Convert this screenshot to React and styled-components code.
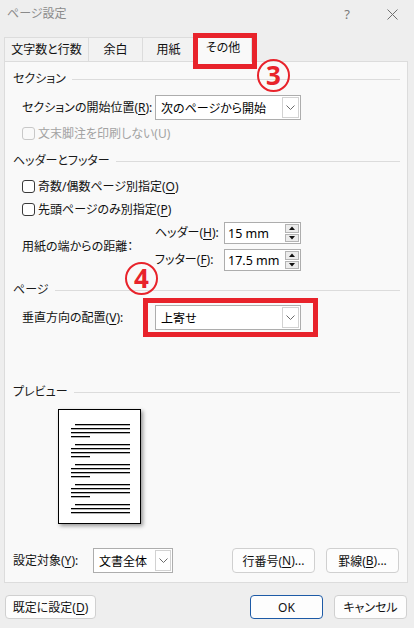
import React from "react";
import styled, { createGlobalStyle } from "styled-components";

const FONT = `"Noto Sans", "Noto Sans CJK JP", sans-serif`;
const RED = "#e8232b";

const Global = createGlobalStyle`
  html, body { margin: 0; padding: 0; background: #eeeeee; }
  body {
    font-family: ${FONT};
    font-size: 12px;
    color: #111;
    font-feature-settings: "palt" 1;
  }
  * { box-sizing: border-box; }
`;

const Window = styled.div`
  position: relative;
  width: 414px;
  height: 628px;
  overflow: hidden;
  background: #eeeeee;
  display: flex;
  flex-direction: column;
`;

const TitleBar = styled.div`
  height: 37px;
  display: flex;
  align-items: flex-start;
  padding: 6px 16px 0 7px;
  color: #8a8a8a;
  line-height: 16px;
`;

const TitleText = styled.span`
  font-size: 12px;
`;

const TitleControls = styled.div`
  margin-left: auto;
  display: flex;
  align-items: center;
  gap: 37px;
  height: 16px;
`;

const Help = styled.span`
  font-size: 13px;
  color: #7a7a7a;
`;

const TabRow = styled.div`
  height: 24px;
  display: flex;
  align-items: flex-end;
  padding-left: 4px;
`;

const Tab = styled.div`
  position: relative;
  width: ${(p) => p.$w}px;
  height: ${(p) => (p.$active ? 28 : 24)}px;
  margin-bottom: ${(p) => (p.$active ? -1 : 0)}px;
  z-index: ${(p) => (p.$active ? 1 : 0)};
  background: ${(p) => (p.$active ? "#f9f9f9" : "#f2f2f2")};
  border: 1px solid #dcdcdc;
  border-bottom: none;
  border-left: ${(p) => (p.$first ? "1px solid #dcdcdc" : "none")};
  display: flex;
  justify-content: center;
  padding-top: ${(p) => (p.$active ? 5 : 4)}px;
  font-size: 12px;
  line-height: 16px;
  color: #111;
`;

const Panel = styled.div`
  margin: 0 6px 0 4px;
  height: 522px;
  background: #f9f9f9;
  border: 1px solid #dcdcdc;
  padding: 0 7px 9px 8px;
  display: flex;
  flex-direction: column;
`;

const GroupHeader = styled.div`
  display: flex;
  align-items: center;
  gap: 6px;
  height: 16px;
  line-height: 16px;
  margin-top: ${(p) => p.$mt}px;
  color: #1a1a1a;
  &::after {
    content: "";
    flex: 1;
    height: 1px;
    background: #dcdcdc;
  }
`;

const Row = styled.div`
  display: flex;
  align-items: center;
  margin-left: 9px;
  margin-top: ${(p) => p.$mt}px;
`;

const Label = styled.span`
  width: ${(p) => p.$w}px;
  flex: none;
  line-height: 16px;
  color: ${(p) => (p.$disabled ? "#a3a3a3" : "#111")};
`;

const Key = styled.span`
  text-decoration: underline;
  text-underline-offset: 2px;
`;

const Select = styled.div`
  width: ${(p) => p.$w}px;
  height: 25px;
  flex: none;
  border: 1px solid #adadad;
  background: #fff;
  display: flex;
`;

const SelectText = styled.span`
  flex: 1;
  display: flex;
  align-items: center;
  padding-left: 5px;
  color: #000;
`;

const DropBtn = styled.span`
  width: ${(p) => p.$w || 17}px;
  margin: 1px;
  border: 1px solid #d2d2d2;
  background: #fff;
  display: flex;
  align-items: center;
  justify-content: center;
`;

const CheckRow = styled.label`
  display: flex;
  align-items: center;
  gap: 3px;
  height: 16px;
  margin-left: 9px;
  margin-top: ${(p) => p.$mt}px;
  color: ${(p) => (p.$disabled ? "#a3a3a3" : "#111")};
`;

const Box = styled.span`
  width: 13px;
  height: 13px;
  border: 1px solid ${(p) => (p.$disabled ? "#c8c8c8" : "#3a3a3a")};
  border-radius: 3px;
  background: ${(p) => (p.$disabled ? "#f9f9f9" : "#fff")};
  flex: none;
`;

const SpinGrid = styled.div`
  display: grid;
  grid-template-columns: 69px 77px;
  row-gap: 5px;
  align-items: center;
`;

const Spin = styled.div`
  width: 77px;
  height: 22px;
  border: 1px solid #adadad;
  background: #fff;
  display: flex;
`;

const SpinText = styled.span`
  flex: 1;
  display: flex;
  align-items: center;
  padding-left: 3px;
  font-size: 12.5px;
  color: #000;
`;

const SpinBtns = styled.span`
  width: 14px;
  margin: 1px 1px 1px 0;
  display: flex;
  flex-direction: column;
  gap: 1px;
`;

const SpinBtn = styled.span`
  flex: 1;
  border: 1px solid #b4b4b4;
  background: #ececec;
  display: flex;
  align-items: center;
  justify-content: center;
`;

const PreviewPage = styled.div`
  margin: 9px 0 0 45px;
  width: 83px;
  height: 115px;
  background: #fff;
  border: 1px solid #000;
  box-shadow: 2px 2px 4px rgba(0, 0, 0, 0.4);
  flex: none;
`;

const BottomRow = styled.div`
  display: flex;
  align-items: center;
  margin-top: 24px;
  height: 25px;
`;

const Button = styled.button`
  width: ${(p) => p.$w}px;
  height: ${(p) => p.$h || 24}px;
  margin-left: ${(p) => p.$ml || 0}px;
  border: 1px solid ${(p) => (p.$primary ? "#1d5aa6" : "#d0d0d0")};
  border-radius: 4px;
  background: #fdfdfd;
  font-family: ${FONT};
  font-feature-settings: "palt" 1;
  font-size: 12px;
  color: #111;
  padding: 0;
  display: flex;
  align-items: center;
  justify-content: center;
`;

const ButtonBar = styled.div`
  display: flex;
  align-items: center;
  height: 24px;
  margin-top: 12px;
  padding: 0 7px 0 5px;
`;

const Spacer = styled.div`
  flex: 1;
`;

const RedBox = styled.div`
  position: absolute;
  left: ${(p) => p.$x}px;
  top: ${(p) => p.$y}px;
  width: ${(p) => p.$w}px;
  height: ${(p) => p.$h}px;
  border: 5px solid ${RED};
  pointer-events: none;
  z-index: 5;
`;

const Badge = styled.div`
  position: absolute;
  left: ${(p) => p.$x}px;
  top: ${(p) => p.$y}px;
  width: 33px;
  height: 33px;
  border: 2.5px solid ${RED};
  border-radius: 50%;
  color: ${RED};
  font-family: "Noto Sans", sans-serif;
  font-weight: 700;
  font-size: 26px;
  line-height: 28px;
  text-align: center;
  z-index: 6;
`;

const Chevron = () => (
  <svg width="9" height="5" viewBox="0 0 9 5">
    <path d="M0.5 0.5 L4.5 4.5 L8.5 0.5" fill="none" stroke="#6a6a6a" strokeWidth="1" />
  </svg>
);

const Tri = ({ up }) => (
  <svg width="6" height="4" viewBox="0 0 6 4">
    <path d={up ? "M0 4 L3 0.5 L6 4 Z" : "M0 0 L3 3.5 L6 0 Z"} fill="#111" />
  </svg>
);

const CloseIcon = () => (
  <svg width="11" height="11" viewBox="0 0 11 11">
    <path d="M0.5 0.5 L10.5 10.5 M10.5 0.5 L0.5 10.5" stroke="#6f6f6f" strokeWidth="1" />
  </svg>
);

const PageLines = () => {
  const groups = [14, 34, 54, 74, 94];
  const lines = [];
  groups.forEach((y, gi) => {
    const n = gi === 4 ? 3 : 4;
    for (let i = 0; i < n; i++) {
      let x1 = 12;
      let x2 = 71;
      if (i === 0) x1 = 16;
      if (i === 3) x2 = 31;
      lines.push(<rect key={`${gi}-${i}`} x={x1} y={y + i * 4} width={x2 - x1} height="1.3" fill="#000" />);
    }
  });
  return (
    <svg width="81" height="113" viewBox="0 0 81 113">
      {lines}
    </svg>
  );
};

const DropSelect = ({ w, text, btn }) => (
  <Select $w={w}>
    <SelectText>{text}</SelectText>
    <DropBtn $w={btn}>
      <Chevron />
    </DropBtn>
  </Select>
);

const SpinBox = ({ value }) => (
  <Spin>
    <SpinText>{value}</SpinText>
    <SpinBtns>
      <SpinBtn>
        <Tri up />
      </SpinBtn>
      <SpinBtn>
        <Tri />
      </SpinBtn>
    </SpinBtns>
  </Spin>
);

export default function App() {
  return (
    <>
      <Global />
      <Window>
        <TitleBar>
          <TitleText>ページ設定</TitleText>
          <TitleControls>
            <Help>?</Help>
            <CloseIcon />
          </TitleControls>
        </TitleBar>

        <TabRow>
          <Tab $w={85} $first>文字数と行数</Tab>
          <Tab $w={54}>余白</Tab>
          <Tab $w={52}>用紙</Tab>
          <Tab $w={57} $active>その他</Tab>
        </TabRow>

        <Panel>
          <GroupHeader $mt={9}>セクション</GroupHeader>
          <Row $mt={8}>
            <Label $w={133}>
              セクションの開始位置(<Key>R</Key>):
            </Label>
            <DropSelect w={146} text="次のページから開始" />
          </Row>
          <CheckRow $mt={5} $disabled>
            <Box $disabled />
            文末脚注を印刷しない(U)
          </CheckRow>

          <GroupHeader $mt={12}>ヘッダーとフッター</GroupHeader>
          <CheckRow $mt={9}>
            <Box />
            <span>
              奇数/偶数ページ別指定(<Key>O</Key>)
            </span>
          </CheckRow>
          <CheckRow $mt={7}>
            <Box />
            <span>
              先頭ページのみ別指定(<Key>P</Key>)
            </span>
          </CheckRow>
          <Row $mt={5}>
            <Label $w={133}>用紙の端からの距離：</Label>
            <SpinGrid>
              <Label $w={69}>
                ヘッダー(<Key>H</Key>):
              </Label>
              <SpinBox value="15 mm" />
              <Label $w={69}>
                フッター(<Key>F</Key>):
              </Label>
              <SpinBox value="17.5 mm" />
            </SpinGrid>
          </Row>

          <GroupHeader $mt={11}>ページ</GroupHeader>
          <Row $mt={7}>
            <Label $w={133}>
              垂直方向の配置(<Key>V</Key>):
            </Label>
            <DropSelect w={146} text="上寄せ" />
          </Row>

          <GroupHeader $mt={54}>プレビュー</GroupHeader>
          <PreviewPage>
            <PageLines />
          </PreviewPage>

          <BottomRow>
            <Label $w={80}>
              設定対象(<Key>Y</Key>):
            </Label>
            <DropSelect w={80} btn={16} text="文書全体" />
            <Button $w={83} $h={25} $ml={59}>
              行番号(<Key>N</Key>)...
            </Button>
            <Button $w={73} $h={25} $ml={11}>
              罫線(<Key>B</Key>)...
            </Button>
          </BottomRow>
        </Panel>

        <ButtonBar>
          <Button $w={91}>
            既定に設定(<Key>D</Key>)
          </Button>
          <Spacer />
          <Button $w={73} $primary>
            OK
          </Button>
          <Button $w={73} $ml={11}>
            キャンセル
          </Button>
        </ButtonBar>

        <RedBox $x={193} $y={33} $w={64} $h={36} />
        <Badge $x={257} $y={59}>3</Badge>
        <RedBox $x={143} $y={298} $w={175} $h={39} />
        <Badge $x={125} $y={262}>4</Badge>
      </Window>
    </>
  );
}
